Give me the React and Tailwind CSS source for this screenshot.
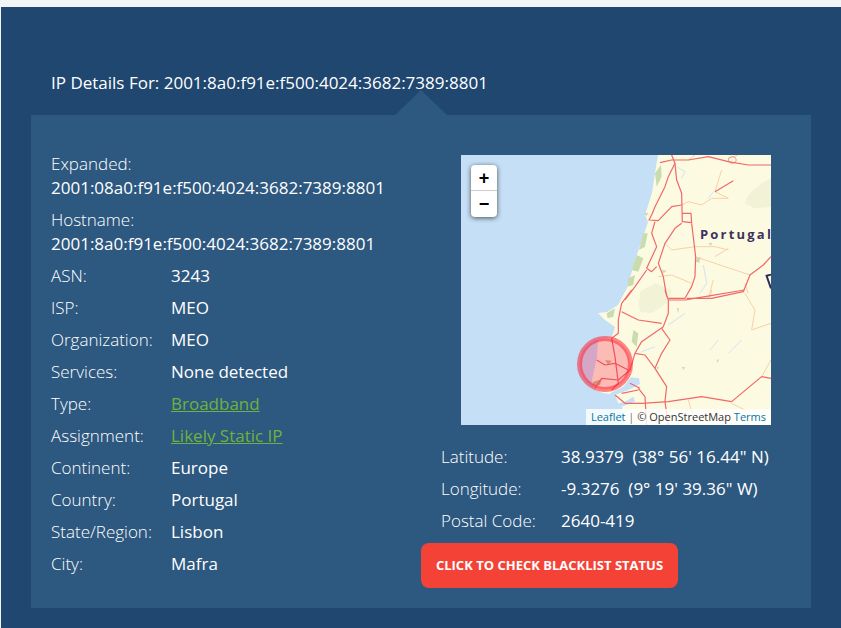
const leftRows = [
  ['ASN:', '3243'],
  ['ISP:', 'MEO'],
  ['Organization:', 'MEO'],
  ['Services:', 'None detected'],
  ['Type:', 'Broadband', true],
  ['Assignment:', 'Likely Static IP', true],
  ['Continent:', 'Europe'],
  ['Country:', 'Portugal'],
  ['State/Region:', 'Lisbon'],
  ['City:', 'Mafra'],
];

const geoRows = [
  ['Latitude:', '38.9379\u00a0\u00a0(38° 56\' 16.44" N)'],
  ['Longitude:', '-9.3276\u00a0\u00a0(9° 19\' 39.36" W)'],
  ['Postal Code:', '2640-419'],
];

function Row({ label, value, link }) {
  return (
    <div className="flex h-8 items-center">
      <span className="w-[120px] shrink-0 font-light">{label}</span>
      {link ? (
        <a href="#" className="font-normal text-[#6cb33f] underline">{value}</a>
      ) : (
        <span className="font-medium">{value}</span>
      )}
    </div>
  );
}

function MapDrawing() {
  return (
    <svg viewBox="0 0 310 270" className="block h-full w-full">
      <rect width="310" height="270" fill="#c5dff6" />
      <path
        d="M197 0L194 18L191 38L184 60L187 67L181 85L174 105L169 123L166 133L157 150L146 157L137 158L144 165L154 172L151 182L137 185L136 202L131 225L134 235L142 238L154 240L157 250L161 252L164 270L310 270L310 0Z"
        fill="#fdfae2"
      />
      {/* upper half, traced from the top crop */}
      <g transform="translate(-6,-5) scale(0.3333)" fill="none" strokeLinejoin="round" className="blur-[0.3px]">
        <g stroke="none">
          <path d="M600 70L618 45L620 80L605 110Z" fill="#c9dcae" />
          <path d="M565 250L578 250L570 290L552 300Z" fill="#c9dcae" />
          <path d="M545 315L565 325L550 365L530 360Z" fill="#c9dcae" />
          <path d="M520 385L540 375L535 405L518 410Z" fill="#c9dcae" />
          <path d="M565 190L580 188L575 198Z" fill="#c9dcae" />
          <path d="M725 325L737 320L733 338L722 336Z" fill="#c9dcae" />
          <path d="M620 360L635 362L625 370Z" fill="#c9dcae" />
          <path d="M760 280L772 278L768 288Z" fill="#c9dcae" />
          <path d="M880 135L920 100L948 85L948 170L900 175L870 160Z" fill="#f1f2d6" />
          <path d="M555 425L600 400L650 420L640 450L555 450Z" fill="#f1f2d6" />
        </g>
        <path d="M935 378L948 415M932 378L948 374" stroke="#2f2d55" strokeWidth="6" />
        <g stroke="#cfe3f3" strokeWidth="3">
          <path d="M745 345L755 400L735 430" />
          <path d="M775 125L760 145" />
          <path d="M665 50L690 65L680 85" />
        </g>
        <g stroke="#f9cfa8" strokeWidth="3">
          <path d="M680 165L700 155L740 165L770 145L820 145L780 125L800 60" />
          <path d="M630 280L650 300L720 290L780 290L820 300" />
          <path d="M720 320L780 340L885 375" />
          <path d="M780 320L820 295" />
          <path d="M610 380L650 375L710 400" />
          <path d="M880 430L870 400M760 445L775 390" />
          <path d="M820 25L850 15M700 30L720 15" />
        </g>
        <g stroke="#f0686a" strokeWidth="3.6">
          <path d="M650 15L660 40L640 80L630 110L600 170L590 195L582 210L610 212L650 170L680 165" />
          <path d="M660 40L665 90L680 130L682 215L710 218L708 190L680 190" />
          <path d="M680 220L660 235L630 280L610 340L625 380L635 440" />
          <path d="M600 215L590 250L605 290L575 355L590 365L605 350" />
          <path d="M710 220L722 320L720 380L710 410L690 445L640 445" />
          <path d="M575 360L540 410L510 450" />
          <path d="M695 445L770 445L865 425L885 375L925 345L948 320" />
          <path d="M615 38L650 30L700 30L760 20L820 35L880 45L948 45" />
          <path d="M780 125L835 92" />
          <path d="M820 30a12 10 0 1 0 24 0a12 10 0 1 0 -24 0" strokeWidth="2" />
        </g>
      </g>
      {/* lower half, traced from the bottom crop */}
      <g transform="translate(-6,135) scale(0.3333)" fill="none" strokeLinejoin="round" className="blur-[0.3px]">
        <g stroke="none">
          <path d="M505 290L528 262L552 265L555 282L525 298L498 308L480 315L490 340L510 335L535 320L540 335L500 350L480 345L465 310Z" fill="#c5dff6" />
          <path d="M550 30L590 0L630 5L635 40L590 70L555 65Z" fill="#f1f2d6" />
          <path d="M455 70L480 55L475 80L458 85Z" fill="#c9dcae" />
          <path d="M535 120L550 130L545 170L530 155Z" fill="#c9dcae" />
          <path d="M450 210L470 212L460 225Z" fill="#c8c08c" />
          <path d="M415 275L440 268L435 285L412 288Z" fill="#c8c08c" />
          <path d="M785 210L792 208L788 220Z" fill="#c9dcae" />
          <path d="M680 230L690 232L686 240Z" fill="#c9dcae" />
          <path d="M605 230L612 232L608 240Z" fill="#c9dcae" />
          <path d="M665 55L672 55L670 70Z" fill="#c9dcae" />
        </g>
        <g stroke="#f9cfa8" strokeWidth="3">
          <path d="M870 10L900 60L890 120L948 100" />
          <path d="M948 210L920 260" />
          <path d="M770 0L765 25" />
          <path d="M830 340L870 360M700 330L720 400" />
        </g>
        <g stroke="#cfe3f3" strokeWidth="3">
          <path d="M640 105L690 70" />
          <path d="M790 150L765 180" />
          <path d="M860 150L820 190" />
          <path d="M600 170L560 185" />
        </g>
        <g stroke="#f0686a" strokeWidth="3.6">
          <path d="M530 0L500 40L490 90L490 130L470 145L480 200L490 280L470 300" />
          <path d="M630 0L640 30L640 70L625 110L560 155L540 190L525 240L490 270L440 265L420 295" />
          <path d="M500 65L550 90L620 100" />
          <path d="M620 115L645 150L620 190L600 235L635 290L630 335L640 405" />
          <path d="M540 190L570 195L600 235" />
          <path d="M425 210L450 225L480 220L520 240" />
          <path d="M640 30L690 30L750 20L868 0" />
          <path d="M480 315L510 340L560 340L640 335L740 320L830 335L920 260L948 265" />
          <path d="M550 295L570 320L575 405" />
          <path d="M525 280L555 295" />
          <path d="M500 310L550 300" />
        </g>
      </g>
      <circle cx="144" cy="209" r="25.5" fill="#ff0033" fillOpacity="0.25" stroke="#ff2233" strokeOpacity="0.55" strokeWidth="5" />
      <text x="239" y="84" fill="#3d3160" fontFamily="'Open Sans', sans-serif" fontSize="13" fontWeight="700" letterSpacing="2.2">Portugal</text>
    </svg>
  );
}

export default function App() {
  return (
    <div className="h-[628px] overflow-hidden bg-[#f3f4f6] pl-px pt-[7px] font-['Open_Sans',sans-serif] text-[17px] text-white">
      <div className="h-[621px] bg-[#20476f] pt-16">
        <h1 className="pl-[50px] text-[17px] font-normal leading-6">
          IP Details For: 2001:8a0:f91e:f500:4024:3682:7389:8801
        </h1>
        <div className="relative ml-[30px] mt-5 flex h-[493px] w-[780px] bg-[#2d5880]">
          <div className="absolute left-[364px] top-[-25px] h-[25px] w-[52px] bg-[#2d5880] [clip-path:polygon(50%_0,100%_100%,0_100%)]" />

          <div className="w-[390px] pl-5 pt-[37px]">
            <div className="mb-2 leading-6">
              <div className="font-light">Expanded:</div>
              <div className="font-normal">2001:08a0:f91e:f500:4024:3682:7389:8801</div>
            </div>
            <div className="mb-1 leading-6">
              <div className="font-light">Hostname:</div>
              <div className="font-normal">2001:8a0:f91e:f500:4024:3682:7389:8801</div>
            </div>
            {leftRows.map(([label, value, link]) => (
              <Row key={label} label={label} value={value} link={link} />
            ))}
          </div>

          <div className="w-[390px] pt-10">
            <div className="relative ml-10 h-[270px] w-[310px] overflow-hidden">
              <MapDrawing />
              <div className="absolute left-2.5 top-2.5 w-[26px] rounded bg-white font-['Liberation_Sans',sans-serif] text-black shadow-[0_1px_5px_rgba(0,0,0,0.65)]">
                <div className="flex h-[26px] items-center justify-center border-b border-[#ccc] text-lg font-bold leading-none">+</div>
                <div className="flex h-[26px] items-center justify-center text-lg font-bold leading-none">−</div>
              </div>
              <div className="absolute bottom-0 right-0 bg-white/80 px-[5px] text-[11px] leading-4 text-[#333]">
                <a href="#" className="text-[#0078a8]">Leaflet</a>
                <span className="text-[#777]"> | </span>
                © OpenStreetMap <a href="#" className="text-[#0078a8]">Terms</a>
              </div>
            </div>
            <div className="mt-4 pl-5">
              {geoRows.map(([label, value]) => (
                <div key={label} className="flex h-8 items-center">
                  <span className="w-[120px] shrink-0 font-light">{label}</span>
                  <span className="font-medium">{value}</span>
                </div>
              ))}
            </div>
            <button className="mt-1.5 flex h-[45px] w-[257px] items-center justify-center rounded-lg bg-[#f44336] text-[13px] font-bold text-white">
              CLICK TO CHECK BLACKLIST STATUS
            </button>
          </div>
        </div>
      </div>
    </div>
  );
}
